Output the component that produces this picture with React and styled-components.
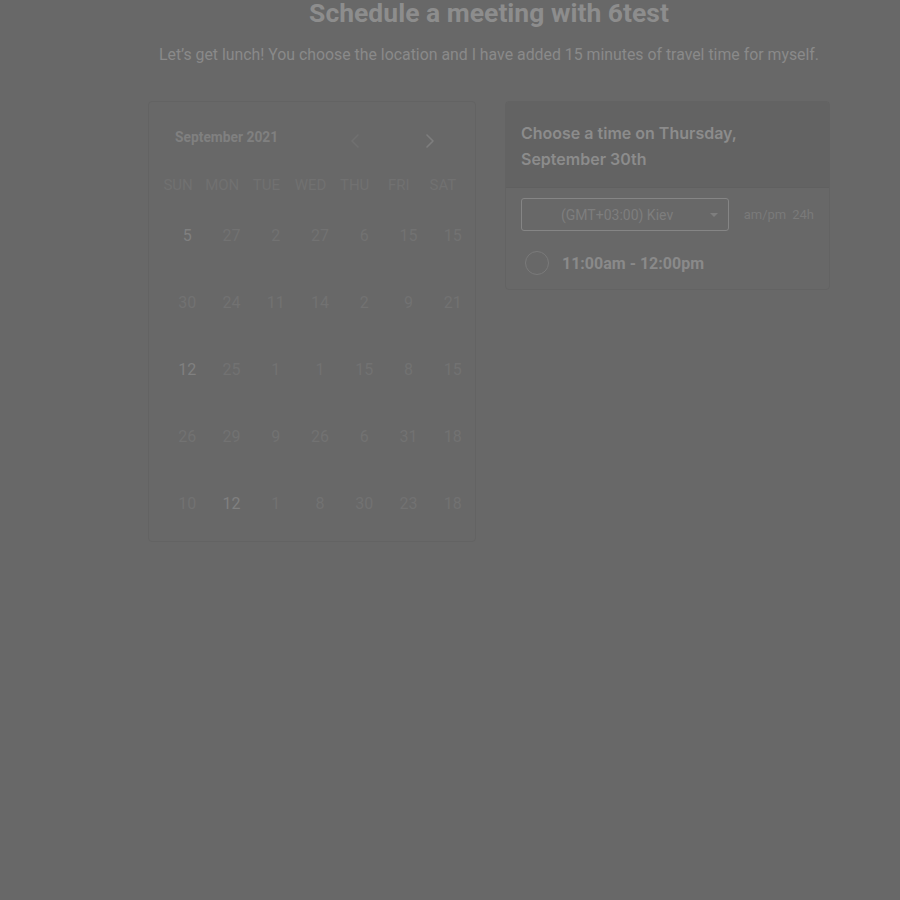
import styled, { createGlobalStyle } from 'styled-components';

const GlobalStyle = createGlobalStyle`
  html, body {
    margin: 0;
    background: #686868;
    font-family: Roboto, "Liberation Sans", sans-serif;
  }
`;

const weekdays = ['Sun', 'Mon', 'Tue', 'Wed', 'Thu', 'Fri', 'Sat'];

const weeks = [
  [{ n: 5, on: true }, { n: 27 }, { n: 2 }, { n: 27 }, { n: 6 }, { n: 15 }, { n: 15 }],
  [{ n: 30 }, { n: 24 }, { n: 11 }, { n: 14 }, { n: 2 }, { n: 9 }, { n: 21 }],
  [{ n: 12, on: true }, { n: 25 }, { n: 1 }, { n: 1 }, { n: 15 }, { n: 8 }, { n: 15 }],
  [{ n: 26 }, { n: 29 }, { n: 9 }, { n: 26 }, { n: 6 }, { n: 31 }, { n: 18 }],
  [{ n: 10 }, { n: 12, on: true }, { n: 1 }, { n: 8 }, { n: 30 }, { n: 23 }, { n: 18 }],
];

const Chevron = ({ dir }) => (
  <svg width="12" height="14" viewBox="0 0 12 14" fill="none">
    <polyline
      points={dir === 'left' ? '8,1 2,7 8,13' : '4,1 10,7 4,13'}
      stroke="currentColor"
      strokeWidth="1.6"
      strokeLinecap="round"
      strokeLinejoin="round"
    />
  </svg>
);

const App = () => {
  return (
    <Page>
      <GlobalStyle />
      <Title>Schedule a meeting with 6test</Title>
      <Subtitle>
        Let’s get lunch! You choose the location and I have added 15 minutes of travel time for myself.
      </Subtitle>
      <Columns>
        <Calendar>
          <CalHeader>
            <MonthLabel>September 2021</MonthLabel>
            <Nav>
              <NavButton>
                <Chevron dir="left" />
              </NavButton>
              <NavButton active>
                <Chevron dir="right" />
              </NavButton>
            </Nav>
          </CalHeader>
          <WeekdayRow>
            {weekdays.map((d) => (
              <Weekday key={d}>{d}</Weekday>
            ))}
          </WeekdayRow>
          <DaysGrid>
            {weeks.flat().map((d, i) => (
              <Day key={i} on={d.on ? 1 : 0}>
                {d.n}
              </Day>
            ))}
          </DaysGrid>
        </Calendar>

        <TimePanel>
          <PanelHeader>Choose a time on Thursday, September 30th</PanelHeader>
          <PanelBody>
            <ZoneRow>
              <Select>
                (GMT+03:00) Kiev
                <Caret />
              </Select>
              <Formats>
                <span>am/pm</span>
                <span>24h</span>
              </Formats>
            </ZoneRow>
            <Slot>
              <Radio />
              <SlotLabel>11:00am - 12:00pm</SlotLabel>
            </Slot>
          </PanelBody>
        </TimePanel>
      </Columns>
    </Page>
  );
};

export default App;

const Page = styled.main`
  width: 682px;
  margin-left: 148px;
  min-height: 900px;
`;

const Title = styled.h1`
  margin: 0;
  font-size: 26.5px;
  line-height: 25px;
  font-weight: 700;
  text-align: center;
  color: #8d8d8d;
`;

const Subtitle = styled.p`
  margin: 18px 0 0;
  font-size: 15.85px;
  line-height: 24px;
  text-align: center;
  color: #8a8a8a;
`;

const Columns = styled.div`
  display: grid;
  grid-template-columns: 328px 1fr;
  column-gap: 29px;
  align-items: start;
  margin-top: 34px;
`;

const Calendar = styled.section`
  border: 1px solid #636363;
  border-radius: 4px;
  padding-bottom: 4px;
`;

const CalHeader = styled.div`
  display: flex;
  align-items: flex-start;
  justify-content: space-between;
  padding: 26px 34px 0 26px;
`;

const MonthLabel = styled.span`
  font-size: 13.8px;
  line-height: 18px;
  font-weight: 700;
  color: #808080;
`;

const Nav = styled.div`
  display: flex;
  gap: 49px;
`;

const NavButton = styled.button`
  width: 24px;
  height: 26px;
  padding: 0;
  border: 0;
  background: none;
  display: flex;
  align-items: center;
  justify-content: center;
  color: ${(p) => (p.active ? '#7e7e7e' : '#707070')};
`;

const WeekdayRow = styled.div`
  display: grid;
  grid-template-columns: repeat(7, 1fr);
  padding: 0 10px 0 7px;
  margin-top: 22px;
`;

const Weekday = styled.span`
  font-size: 15px;
  line-height: 18px;
  text-transform: uppercase;
  text-align: center;
  color: #717171;
`;

const DaysGrid = styled.div`
  display: grid;
  grid-template-columns: repeat(7, 1fr);
  grid-auto-rows: 67px;
  padding: 8px 0 0 16px;
`;

const Day = styled.span`
  display: flex;
  align-items: center;
  justify-content: center;
  font-size: 16px;
  color: ${(p) => (p.on ? '#808080' : '#727272')};
`;

const TimePanel = styled.section`
  border: 1px solid #636363;
  border-radius: 4px;
  overflow: hidden;
`;

const PanelHeader = styled.h2`
  margin: 0;
  padding: 18px 60px 15px 15px;
  background: #636363;
  border-bottom: 1px solid #606060;
  font-family: Inter, Roboto, sans-serif;
  font-size: 16px;
  line-height: 26px;
  font-weight: 600;
  color: #8c8c8c;
`;

const PanelBody = styled.div`
  padding: 10px 15px 14px;
`;

const ZoneRow = styled.div`
  display: flex;
  align-items: center;
  justify-content: space-between;
`;

const Select = styled.div`
  position: relative;
  box-sizing: border-box;
  width: 208px;
  height: 33px;
  padding-left: 39px;
  display: flex;
  align-items: center;
  border: 1px solid #858585;
  border-radius: 3px;
  font-size: 14px;
  color: #7e7e7e;
`;

const Caret = styled.span`
  position: absolute;
  right: 10px;
  top: 14px;
  border-left: 4px solid transparent;
  border-right: 4px solid transparent;
  border-top: 4px solid #7e7e7e;
`;

const Formats = styled.div`
  display: flex;
  gap: 6px;
  font-size: 13px;
  color: #7a7a7a;
`;

const Slot = styled.div`
  display: flex;
  align-items: center;
  gap: 13px;
  margin-top: 20px;
  padding-left: 4px;
`;

const Radio = styled.span`
  box-sizing: border-box;
  width: 24px;
  height: 24px;
  border: 1.5px solid #7a7a7a;
  border-radius: 50%;
`;

const SlotLabel = styled.span`
  font-size: 16px;
  font-weight: 700;
  color: #8a8a8a;
`;
